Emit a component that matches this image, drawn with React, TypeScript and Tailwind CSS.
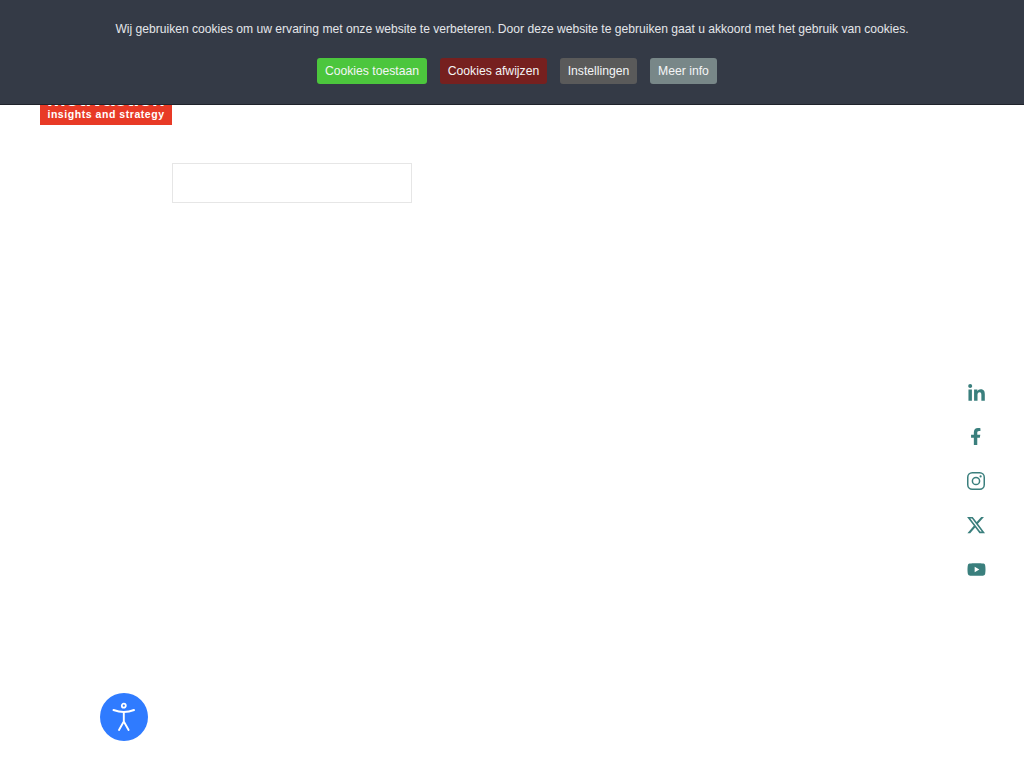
import { FaFacebookF, FaLinkedinIn, FaYoutube } from "react-icons/fa";
import { FaXTwitter } from "react-icons/fa6";

function InstagramIcon() {
  return (
    <svg width="18" height="18" viewBox="0 0 18 18" fill="none" stroke="currentColor">
      <rect x="0.75" y="0.75" width="16.5" height="16.5" rx="4.5" strokeWidth="1.5" />
      <circle cx="9" cy="9" r="3.6" strokeWidth="1.5" />
      <circle cx="13.6" cy="4.4" r="1.1" fill="currentColor" stroke="none" />
    </svg>
  );
}

const socials = [
  { name: "LinkedIn", icon: <FaLinkedinIn size={19} /> },
  { name: "Facebook", icon: <FaFacebookF size={17.5} className="-mt-px" /> },
  { name: "Instagram", icon: <InstagramIcon /> },
  { name: "X", icon: <FaXTwitter size={20} /> },
  { name: "YouTube", icon: <FaYoutube size={19} /> },
];

function CookieBar() {
  return (
    <div className="fixed inset-x-0 top-0 z-20 flex h-[105px] flex-col items-center border-b border-[#1f232b] bg-[#343a46] pt-[20px] text-white">
      <p className="text-[12.1px] leading-[18px] text-[#e4e6ea]">
        Wij gebruiken cookies om uw ervaring met onze website te verbeteren. Door deze website te gebruiken gaat u akkoord met het gebruik van cookies.
      </p>
      <div className="ml-[10px] mt-[20px] flex gap-[13px] text-[12.2px] leading-[26px] text-[#f4f5f6]">
        <button className="h-[26px] w-[110px] rounded-[3px] bg-[#4cc63d]">Cookies toestaan</button>
        <button className="h-[26px] w-[107px] rounded-[3px] bg-[#76201f]">Cookies afwijzen</button>
        <button className="h-[26px] w-[77px] rounded-[3px] bg-[#5a5a5a]">Instellingen</button>
        <button className="h-[26px] w-[67px] rounded-[3px] bg-[#788788]">Meer info</button>
      </div>
    </div>
  );
}

function Logo() {
  return (
    <div className="flex h-[45px] w-[132px] flex-col items-center justify-end bg-[#e83a26] pb-[6px] font-bold leading-none text-white">
      <span className="text-[21px] leading-[20px]">motivaction</span>
      <span className="text-[10.5px] leading-[10px] tracking-[0.55px]">insights and strategy</span>
    </div>
  );
}

export default function App() {
  return (
    <div className="relative min-h-screen bg-white font-['Liberation_Sans',Arial,sans-serif]">
      <CookieBar />

      <div className="pl-10 pt-[80px]">
        <Logo />
        <div className="ml-[132px] mt-[38px] h-[40px] w-[240px] border border-[#e6e6e6]" />
      </div>

      <div className="fixed right-[38px] top-[371px] flex w-[20px] flex-col items-center">
        {socials.map(({ name, icon }) => (
          <a key={name} aria-label={name} className="flex h-[44px] items-center justify-center text-[#3a7f7d]">
            {icon}
          </a>
        ))}
      </div>

      <button
        aria-label="Toegankelijkheid"
        className="fixed left-[100px] top-[693px] flex h-[48px] w-[48px] items-center justify-center rounded-full bg-[#2f7bff]"
      >
        <svg width="24" height="30" viewBox="0 0 24 30" fill="none" stroke="white" strokeLinecap="round" strokeLinejoin="round">
          <circle cx="11.8" cy="3.7" r="2" strokeWidth="1.8" />
          <path d="M1.5 8 Q7 10 11.8 10 Q17 10 22 8" strokeWidth="2" />
          <path d="M11.8 10 V19.5 M11.8 19.5 L7 28 M11.8 19.5 L16.6 28" strokeWidth="1.9" />
        </svg>
      </button>
    </div>
  );
}
